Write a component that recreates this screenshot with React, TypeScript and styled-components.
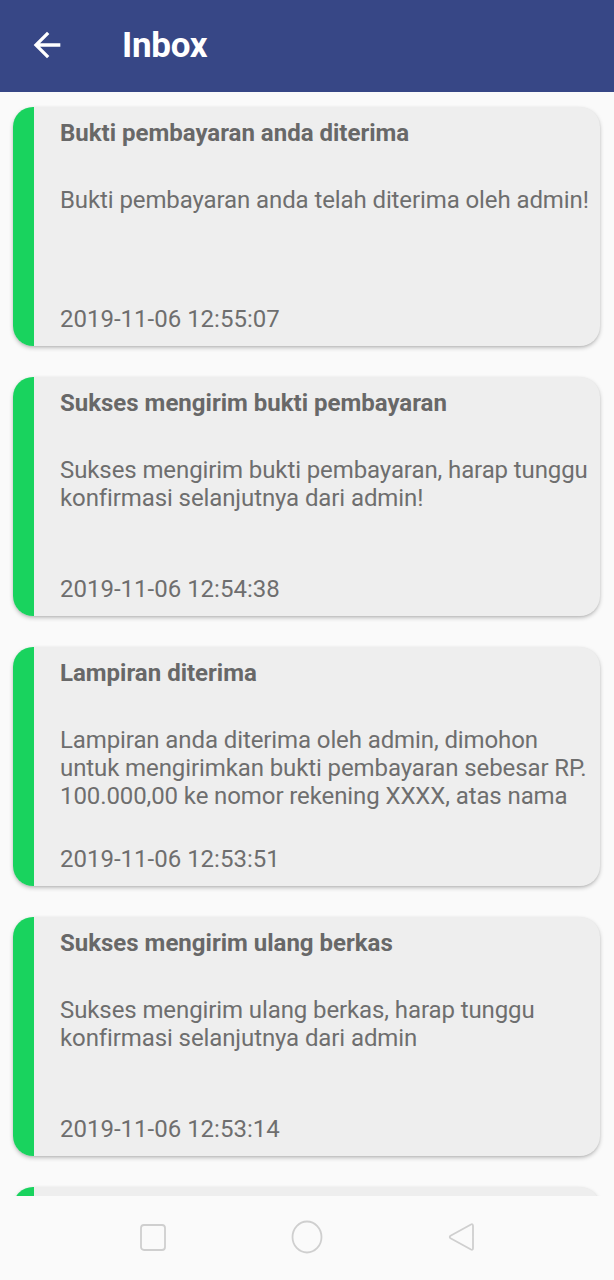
import React from "react";
import styled, { createGlobalStyle } from "styled-components";

const Global = createGlobalStyle`
  html, body { margin: 0; padding: 0; background: #fafafa; }
  body { font-family: Roboto, "Noto Sans", sans-serif; }
  * { box-sizing: border-box; }
`;

const Screen = styled.div`
  width: 614px;
  height: 1280px;
  display: flex;
  flex-direction: column;
  background: #fafafa;
  overflow: hidden;
`;

const AppBar = styled.header`
  height: 92px;
  flex: 0 0 92px;
  background: #374786;
  display: flex;
  align-items: center;
  padding-left: 27px;
  gap: 55px;
`;

const BackButton = styled.div`
  width: 40px;
  height: 40px;
  display: flex;
  margin-top: -2px;
`;

const Title = styled.h1`
  margin: 0;
  color: #ffffff;
  font-family: Roboto, sans-serif;
  font-weight: 700;
  font-size: 35px;
  letter-spacing: -0.3px;
  margin-top: -2px;
`;

const List = styled.main`
  flex: 1;
  overflow: hidden;
  padding: 15px 14px 0 13px;
  display: flex;
  flex-direction: column;
  gap: 31px;
`;

const Card = styled.article`
  flex: 0 0 239px;
  height: 239px;
  display: flex;
  background: #eeeeee;
  border-radius: 20px;
  overflow: hidden;
  box-shadow: 0 2px 4px rgba(0, 0, 0, 0.22), 0 1px 2px rgba(0, 0, 0, 0.08);
`;

const Stripe = styled.div`
  width: 21px;
  flex: 0 0 21px;
  background: #19d35e;
`;

const Content = styled.div`
  flex: 1;
  padding: 13px 6px 13px 26px;
  display: flex;
  flex-direction: column;
  color: #6e6e6e;
  font-family: Roboto, sans-serif;
`;

const CardTitle = styled.div`
  font-weight: 700;
  font-size: 24px;
  line-height: 26px;
  height: 26px;
  color: #686868;
  white-space: nowrap;
`;

const Body = styled.div`
  margin-top: 40px;
  font-size: 24px;
  line-height: 28px;
  letter-spacing: -0.1px;
  height: 84px;
  overflow: hidden;
`;

const Stamp = styled.div`
  margin-top: 35px;
  font-size: 24px;
  line-height: 28px;
`;

const NavBar = styled.nav`
  height: 84px;
  flex: 0 0 84px;
  background: #fafafa;
  display: flex;
  align-items: center;
  justify-content: center;
  padding-bottom: 2px;
`;

const NavSlot = styled.div`
  width: 154px;
  display: flex;
  justify-content: center;
`;

const items = [
  {
    title: "Bukti pembayaran anda diterima",
    body: "Bukti pembayaran anda telah diterima oleh admin!",
    date: "2019-11-06 12:55:07",
  },
  {
    title: "Sukses mengirim bukti pembayaran",
    body: "Sukses mengirim bukti pembayaran, harap tunggu konfirmasi selanjutnya dari admin!",
    date: "2019-11-06 12:54:38",
  },
  {
    title: "Lampiran diterima",
    body: "Lampiran anda diterima oleh admin, dimohon untuk mengirimkan bukti pembayaran sebesar RP. 100.000,00 ke nomor rekening XXXX, atas nama",
    date: "2019-11-06 12:53:51",
  },
  {
    title: "Sukses mengirim ulang berkas",
    body: "Sukses mengirim ulang berkas, harap tunggu konfirmasi selanjutnya dari admin",
    date: "2019-11-06 12:53:14",
  },
];

export default function App() {
  return (
    <Screen>
      <Global />
      <AppBar>
        <BackButton>
          <svg width="40" height="40" viewBox="0 0 24 24" fill="#ffffff">
            <path d="M20 11H7.83l5.59-5.59L12 4l-8 8 8 8 1.41-1.41L7.83 13H20v-2z" />
          </svg>
        </BackButton>
        <Title>Inbox</Title>
      </AppBar>
      <List>
        {items.map((it, i) => (
          <Card key={i}>
            <Stripe />
            <Content>
              <CardTitle>{it.title}</CardTitle>
              <Body>{it.body}</Body>
              <Stamp>{it.date}</Stamp>
            </Content>
          </Card>
        ))}
        <Card>
          <Stripe />
          <Content />
        </Card>
      </List>
      <NavBar>
        <NavSlot>
          <svg width="28" height="30" viewBox="0 0 28 30">
            <rect x="2" y="3" width="24" height="25" rx="3" fill="none" stroke="#cfcfcf" strokeWidth="1.8" />
          </svg>
        </NavSlot>
        <NavSlot>
          <svg width="34" height="34" viewBox="0 0 34 34">
            <ellipse cx="17" cy="17" rx="14.5" ry="15.5" fill="none" stroke="#cfcfcf" strokeWidth="1.8" />
          </svg>
        </NavSlot>
        <NavSlot>
          <svg width="30" height="32" viewBox="0 0 30 32">
            <path d="M25 3.5 Q27 2.5 27 5 L27 27 Q27 29.5 25 28.5 L4.5 17.2 Q3 16 4.5 14.8 Z" fill="none" stroke="#cfcfcf" strokeWidth="1.8" strokeLinejoin="round" />
          </svg>
        </NavSlot>
      </NavBar>
    </Screen>
  );
}
